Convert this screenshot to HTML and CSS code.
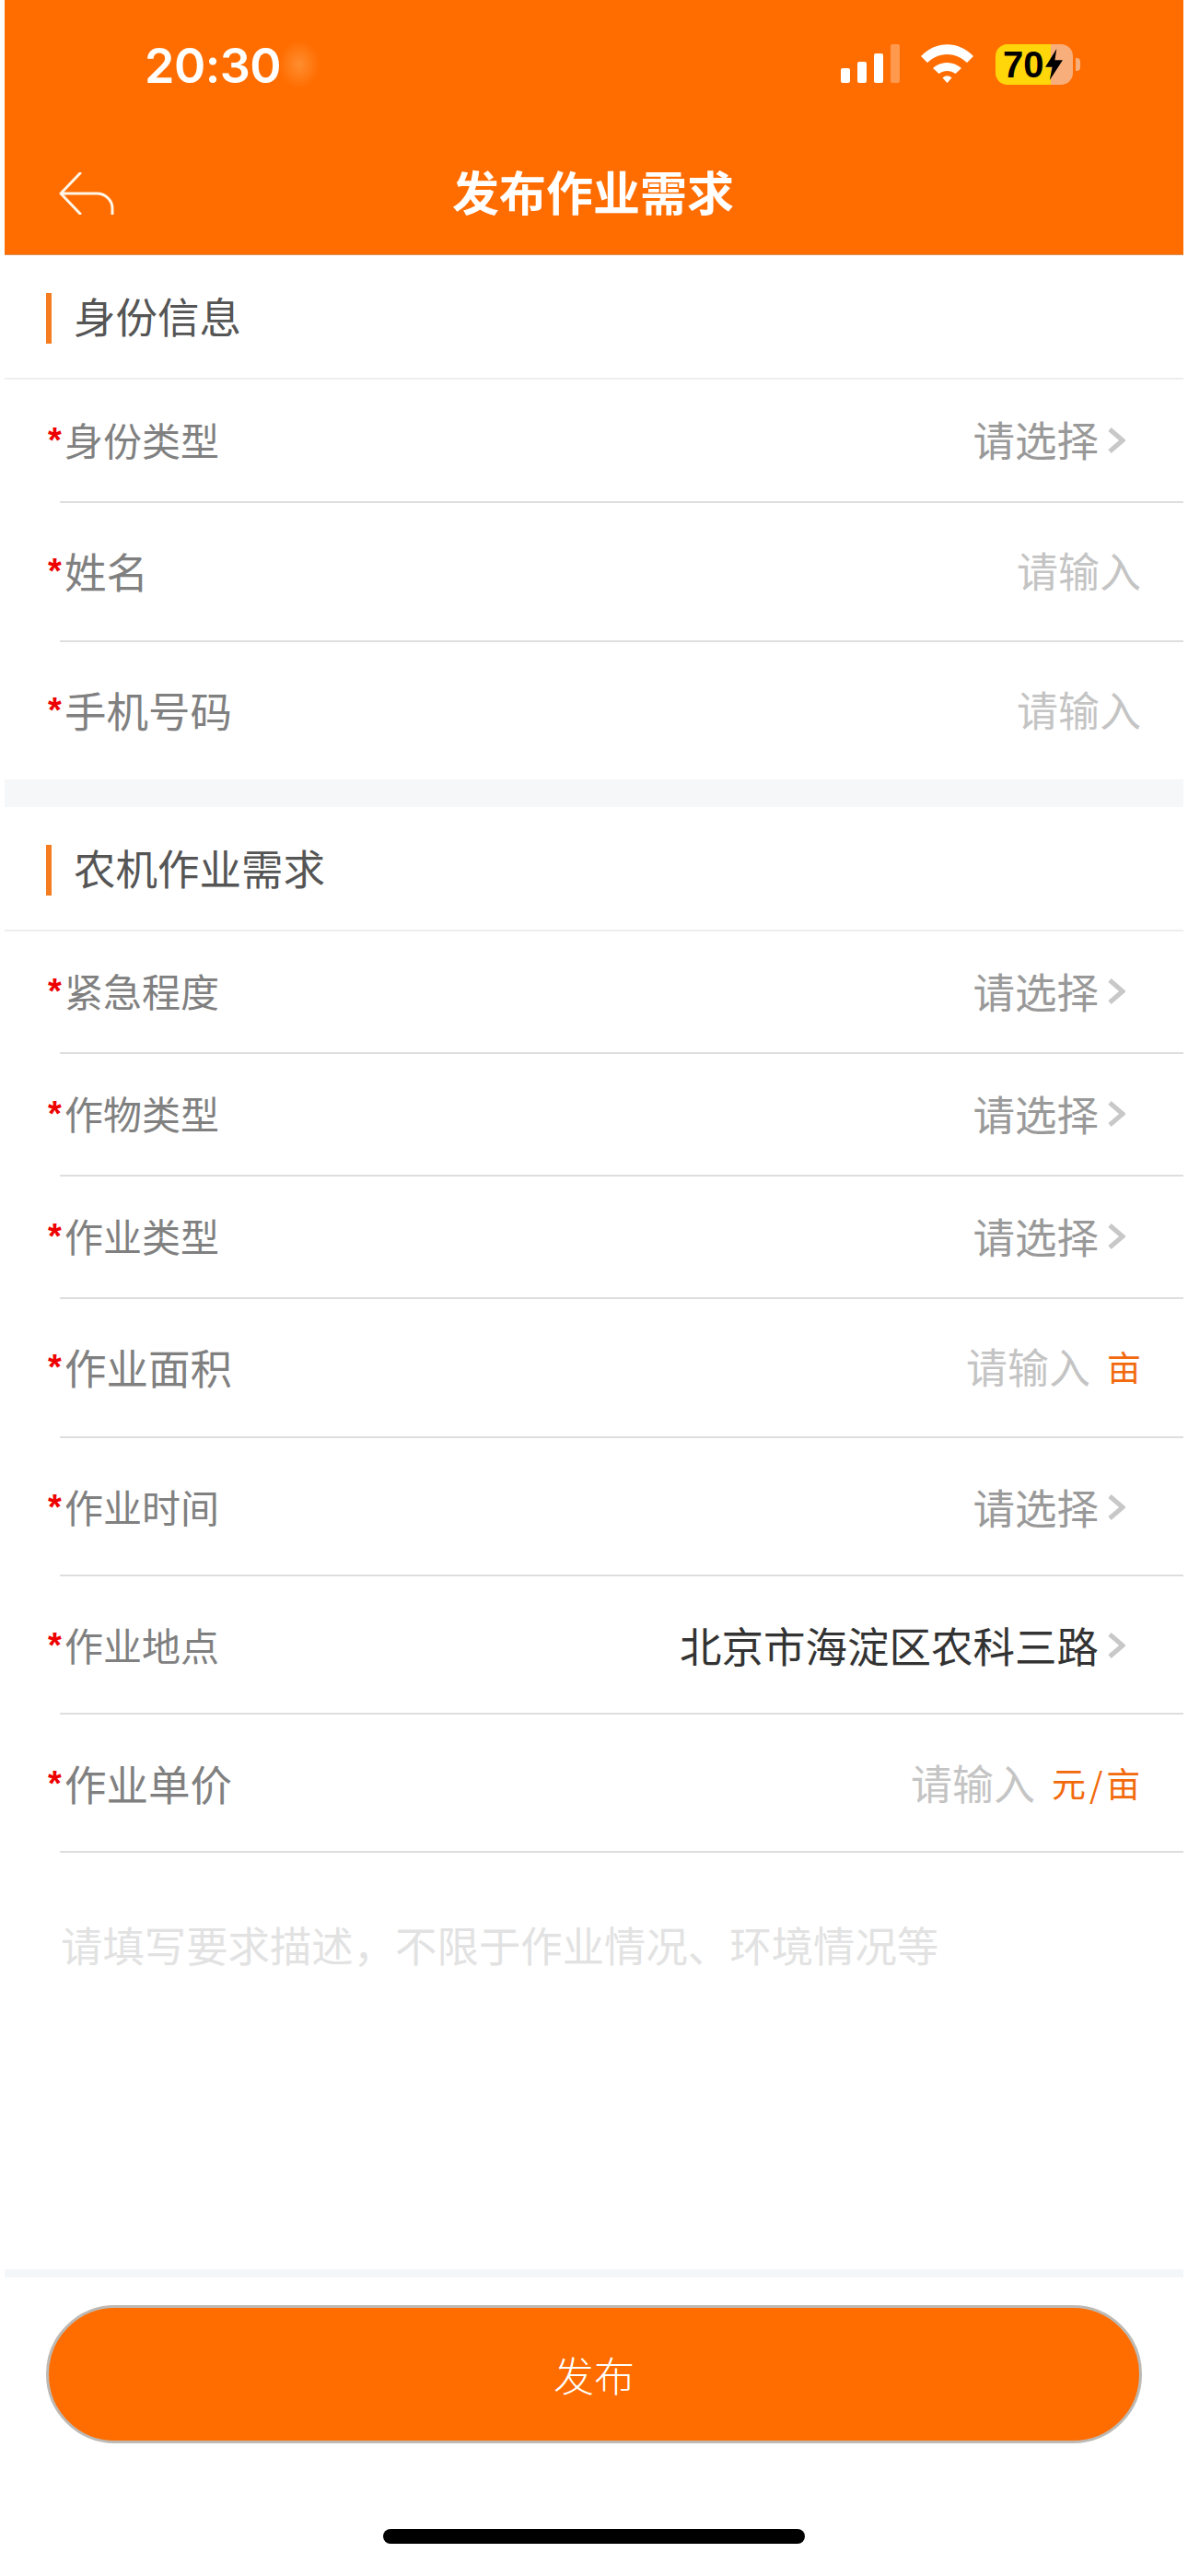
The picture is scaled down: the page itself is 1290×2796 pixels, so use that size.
FILE: index.html
```html
<!DOCTYPE html>
<html lang="zh-CN">
  <head>
    <meta charset="UTF-8" />
    <meta name="viewport" content="width=device-width, initial-scale=1.0" />
    <title>发布作业需求</title>
    <link rel="stylesheet" href="styles.css">
  </head>
  <body>
    <div class="page">
      <header class="top">
        <div class="status">
          <span class="time">20:30</span>
          <span class="time-blur"></span>
          <div class="status-icons">
            <div class="signal">
              <span class="bar b1"></span>
              <span class="bar b2"></span>
              <span class="bar b3"></span>
              <span class="bar b4"></span>
            </div>
            <svg class="wifi" viewBox="0 0 57 42">
              <path d="M0 13C16-4 41-4 57 13L50 20C37 8 20 8 7 20Z" fill="#fff" />
              <path d="M13 26C22 18 35 18 44 26L37.5 32C32 28 25 28 19.5 32Z" fill="#fff" />
              <path d="M23.5 36.500C27 33.500 30 33.500 33.500 36.500L28.500 42Z" fill="#fff" />
            </svg>
            <div class="battery">
              <span>70</span>
              <svg class="bolt" viewBox="0 0 20 36">
                <path d="M13 0L0 21H8L5 36L20 13H11Z" fill="#000" />
              </svg>
            </div>
            <span class="battery-cap"></span>
          </div>
        </div>
        <div class="nav">
          <svg class="back" viewBox="0 0 60 46">
            <path d="M23 1L2 23L23 45M2 23H41C51 23 58 31 58 39V46" fill="none" stroke="#fff6e8" stroke-width="3" stroke-linecap="round" stroke-linejoin="round" />
          </svg>
          <h1>发布作业需求</h1>
        </div>
      </header>

      <section>
        <h2 class="heading"><span>身份信息</span></h2>
        <div class="rule"></div>
        <div class="row h134">
          <label class="small"><i>*</i>身份类型</label>
          <div class="pick">请选择<svg class="chev" viewBox="0 0 20 30"><path d="M3 3L17 15L3 27" /></svg></div>
        </div>
        <div class="divider"></div>
        <div class="row h150">
          <label><i>*</i>姓名</label>
          <div class="hint">请输入</div>
        </div>
        <div class="divider"></div>
        <div class="row h150">
          <label><i>*</i>手机号码</label>
          <div class="hint">请输入</div>
        </div>
      </section>

      <div class="gap"></div>

      <section>
        <h2 class="heading"><span>农机作业需求</span></h2>
        <div class="rule"></div>
        <div class="row h132">
          <label class="small"><i>*</i>紧急程度</label>
          <div class="pick">请选择<svg class="chev" viewBox="0 0 20 30"><path d="M3 3L17 15L3 27" /></svg></div>
        </div>
        <div class="divider"></div>
        <div class="row h132">
          <label class="small"><i>*</i>作物类型</label>
          <div class="pick">请选择<svg class="chev" viewBox="0 0 20 30"><path d="M3 3L17 15L3 27" /></svg></div>
        </div>
        <div class="divider"></div>
        <div class="row h132">
          <label class="small"><i>*</i>作业类型</label>
          <div class="pick">请选择<svg class="chev" viewBox="0 0 20 30"><path d="M3 3L17 15L3 27" /></svg></div>
        </div>
        <div class="divider"></div>
        <div class="row h150">
          <label><i>*</i>作业面积</label>
          <div class="hint">请输入<span class="unit">亩</span></div>
        </div>
        <div class="divider"></div>
        <div class="row h149">
          <label class="small"><i>*</i>作业时间</label>
          <div class="pick">请选择<svg class="chev" viewBox="0 0 20 30"><path d="M3 3L17 15L3 27" /></svg></div>
        </div>
        <div class="divider"></div>
        <div class="row h149">
          <label class="small"><i>*</i>作业地点</label>
          <div class="pick filled">北京市海淀区农科三路<svg class="chev" viewBox="0 0 20 30"><path d="M3 3L17 15L3 27" /></svg></div>
        </div>
        <div class="divider"></div>
        <div class="row h149">
          <label><i>*</i>作业单价</label>
          <div class="hint">请输入<span class="unit wide">元/亩</span></div>
        </div>
        <div class="divider"></div>
      </section>

      <div class="notes">请填写要求描述，不限于作业情况、环境情况等</div>
      <div class="strip"></div>

      <footer class="foot">
        <button type="button" class="submit">发布</button>
        <div class="home-bar"></div>
      </footer>
    </div>
  </body>
</html>
```

FILE: styles.css
```css
* {
  box-sizing: border-box;
}
body {
  margin: 0;
  background: #fff;
  font-family: "Noto Sans CJK SC", "Noto Sans", sans-serif;
  color: #333;
}
.page {
  width: 1280px;
  height: 2796px;
  margin: 0 5px;
  overflow: hidden;
}

/* orange top area */
.top {
  height: 277px;
  background: #ff6d00;
  color: #fff;
  border-bottom: 1px solid #d8905a;
}
.status {
  position: relative;
  display: flex;
  justify-content: space-between;
  height: 166px;
  padding: 50px 112px 0 152px;
}
.time {
  font-family: Inter, "Liberation Sans", sans-serif;
  font-size: 52px;
  font-weight: 600;
  line-height: 44px;
  letter-spacing: -0.5px;
}
.time-blur {
  position: absolute;
  left: 298px;
  top: 44px;
  width: 44px;
  height: 52px;
  background: radial-gradient(closest-side, rgba(255, 150, 60, 0.8), rgba(255, 109, 0, 0));
}
.status-icons {
  display: flex;
  align-items: flex-start;
  margin-top: -2px;
}
.signal {
  display: flex;
  align-items: flex-end;
  gap: 8px;
  height: 42px;
  margin-right: 23px;
}
.bar {
  width: 10px;
  background: #fff;
  border-radius: 2px;
}
.b1 {
  height: 16px;
}
.b2 {
  height: 23px;
}
.b3 {
  height: 32px;
}
.b4 {
  height: 42px;
  opacity: 0.3;
}
.wifi {
  width: 57px;
  height: 42px;
  margin-right: 24px;
}
.battery {
  display: flex;
  align-items: center;
  gap: 1px;
  width: 84px;
  height: 44px;
  padding-left: 8px;
  border-radius: 13px;
  background: linear-gradient(to right, #ffd60a 71%, #f8ae7a 71%);
  color: #000;
  font-family: "Liberation Sans", sans-serif;
  font-size: 40px;
  font-weight: 700;
  line-height: 44px;
}
.bolt {
  width: 19px;
  height: 34px;
}
.battery-cap {
  width: 5px;
  height: 14px;
  margin: 15px 0 0 3px;
  border-radius: 0 4px 4px 0;
  background: #f8ae7a;
}
.nav {
  display: grid;
  grid-template-columns: 1fr auto 1fr;
  align-items: center;
  height: 88px;
  padding: 0 61px 0 59px;
}
.back {
  width: 60px;
  height: 46px;
}
.nav h1 {
  margin: 0;
  padding-bottom: 7px;
  font-size: 51px;
  font-weight: 700;
  line-height: 80px;
}

/* form */
.heading {
  display: flex;
  align-items: center;
  height: 133px;
  margin: 0;
  padding: 4px 0 0 45px;
  font-size: 45.500px;
  font-weight: 400;
  color: #555;
}
.heading::before {
  content: "";
  width: 6px;
  height: 55px;
  margin-right: 24px;
  background: #f57c1f;
}
.heading span {
  margin-top: -7px;
}
.rule {
  height: 2px;
  background: #eeeeee;
}
.divider {
  height: 2px;
  margin-left: 60px;
  background: #dedede;
}
.row {
  display: flex;
  justify-content: space-between;
  align-items: center;
  padding: 0 46px 4px 47px;
}
.h132 {
  height: 131px;
}
.h134 {
  height: 132px;
}
.h149 {
  height: 148px;
  padding-bottom: 1px;
}
.h150 {
  height: 149px;
}
.row label {
  display: flex;
  align-items: center;
  font-size: 45.500px;
  color: #808080;
}
.row label.small {
  font-size: 42px;
}
.row label i {
  width: 18px;
  margin-top: 4px;
  font-family: "Liberation Sans", sans-serif;
  font-size: 38px;
  font-style: normal;
  font-weight: 700;
  color: #ee0000;
}
.pick {
  display: flex;
  align-items: center;
  gap: 9px;
  padding-right: 17px;
  font-size: 45.500px;
  color: #999;
}
.pick.filled {
  color: #333;
}
.chev {
  width: 20px;
  height: 30px;
  margin-top: 3px;
}
.chev path {
  fill: none;
  stroke: #c8c8c8;
  stroke-width: 5;
}
.hint {
  display: flex;
  align-items: center;
  font-size: 45px;
  color: #c4c4c4;
}
.unit {
  margin-left: 18px;
  font-size: 37px;
  color: #f26a0c;
}
.unit.wide {
  letter-spacing: 3.800px;
  margin-right: -3px;
}
.gap {
  height: 30px;
  background: #f5f7f9;
}
.notes {
  height: 452px;
  padding: 66px 0 0 61px;
  font-size: 45.400px;
  line-height: 66px;
  color: #e2e2e2;
}
.strip {
  height: 9px;
  background: #f4f7fa;
}
.foot {
  display: flex;
  flex-direction: column;
  align-items: center;
  padding-top: 30px;
}
.submit {
  width: 1190px;
  height: 150px;
  border: 3px solid #bdb9b4;
  border-radius: 75px;
  background: #ff6d00;
  color: #fff;
  font-family: inherit;
  font-size: 44px;
  font-weight: 300;
}
.home-bar {
  width: 458px;
  height: 16px;
  margin-top: 93px;
  border-radius: 8px;
  background: #000;
}
```
